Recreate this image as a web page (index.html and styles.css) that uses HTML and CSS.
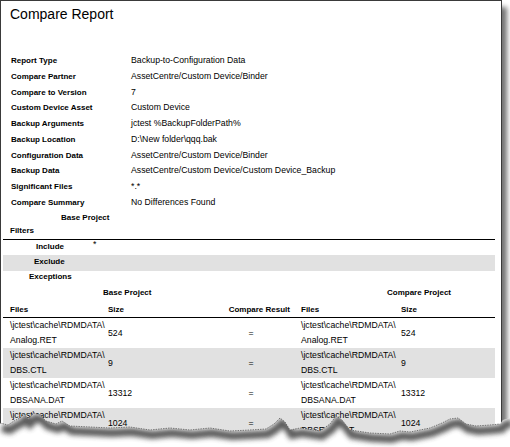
FILE: index.html
```html
<!DOCTYPE html>
<html>
<head>
<meta charset="utf-8">
<title>Compare Report</title>
<link rel="stylesheet" href="styles.css">
</head>
<body>
<div class="sheet">
  <div class="page">
    <h1 class="title">Compare Report</h1>
    <div class="info">
      <div class="irow"><b class="lbl">Report Type</b><span>Backup-to-Configuration Data</span></div>
      <div class="irow"><b class="lbl">Compare Partner</b><span>AssetCentre/Custom Device/Binder</span></div>
      <div class="irow"><b class="lbl">Compare to Version</b><span>7</span></div>
      <div class="irow"><b class="lbl">Custom Device Asset</b><span>Custom Device</span></div>
      <div class="irow"><b class="lbl">Backup Arguments</b><span>jctest %BackupFolderPath%</span></div>
      <div class="irow"><b class="lbl">Backup Location</b><span>D:\New folder\qqq.bak</span></div>
      <div class="irow"><b class="lbl">Configuration Data</b><span>AssetCentre/Custom Device/Binder</span></div>
      <div class="irow"><b class="lbl">Backup Data</b><span>AssetCentre/Custom Device/Custom Device_Backup</span></div>
      <div class="irow"><b class="lbl">Significant Files</b><span>*.*</span></div>
      <div class="irow"><b class="lbl">Compare Summary</b><span>No Differences Found</span></div>
    </div>
    <div class="bp">Base Project</div>
    <div class="filters">Filters</div>
    <div class="frow include"><b>Include</b><span class="star">*</span></div>
    <div class="frow exclude"><b>Exclude</b></div>
    <div class="frow exceptions"><b>Exceptions</b></div>
    <div class="groups"><b class="g1">Base Project</b><b>Compare Project</b></div>
    <div class="tbl">
      <div class="trow head">
        <div class="c1">Files</div><div class="c2">Size</div><div class="c3">Compare Result</div><div class="c4">Files</div><div class="c5">Size</div>
      </div>
      <div class="trow">
        <div class="c1">\jctest\cache\RDMDATA\<br>Analog.RET</div><div class="c2 mid">524</div><div class="c3 mid">=</div><div class="c4">\jctest\cache\RDMDATA\<br>Analog.RET</div><div class="c5 mid">524</div>
      </div>
      <div class="trow alt">
        <div class="c1">\jctest\cache\RDMDATA\<br>DBS.CTL</div><div class="c2 mid">9</div><div class="c3 mid">=</div><div class="c4">\jctest\cache\RDMDATA\<br>DBS.CTL</div><div class="c5 mid">9</div>
      </div>
      <div class="trow">
        <div class="c1">\jctest\cache\RDMDATA\<br>DBSANA.DAT</div><div class="c2 mid">13312</div><div class="c3 mid">=</div><div class="c4">\jctest\cache\RDMDATA\<br>DBSANA.DAT</div><div class="c5 mid">13312</div>
      </div>
      <div class="trow alt">
        <div class="c1">\jctest\cache\RDMDATA\<br>DBSRPT.DAT</div><div class="c2 mid">1024</div><div class="c3 mid">=</div><div class="c4">\jctest\cache\RDMDATA\<br>DBSRPT.DAT</div><div class="c5 mid">1024</div>
      </div>
    </div>
  </div>
  <svg class="torn" width="510" height="447" viewBox="0 0 510 447">
    <defs>
      <filter id="blur" x="-5%" y="-50%" width="110%" height="200%">
        <feGaussianBlur stdDeviation="2.6"/>
      </filter>
      <clipPath id="below">
        <path d="M0,447 L0,423 L8,425 L14,421 L20,418 L24,414 L28,419 L34,413 L40,415 L46,421 L56,424 L62,421 L70,426 L90,427 L110,428 L130,427 L150,430 L170,428 L190,430 L210,428 L230,431 L250,430 L266,429 L274,424 L280,418 L285,422 L290,430 L300,428 L320,431 L330,424 L336,416 L342,420 L350,430 L370,433 L390,434 L400,431 L410,432 L430,428 L442,423 L450,419 L458,418 L466,424 L476,426 L490,425 L500,424 L503,420 L510,418 L510,447 Z"/>
      </clipPath>
    </defs>
    <path class="paper" d="M0,447 L0,423 L8,425 L14,421 L20,418 L24,414 L28,419 L34,413 L40,415 L46,421 L56,424 L62,421 L70,426 L90,427 L110,428 L130,427 L150,430 L170,428 L190,430 L210,428 L230,431 L250,430 L266,429 L274,424 L280,418 L285,422 L290,430 L300,428 L320,431 L330,424 L336,416 L342,420 L350,430 L370,433 L390,434 L400,431 L410,432 L430,428 L442,423 L450,419 L458,418 L466,424 L476,426 L490,425 L500,424 L503,420 L510,418 L510,447 Z"/>
    <g clip-path="url(#below)">
      <path class="shadow" filter="url(#blur)" transform="translate(2,5)" d="M0,423 L8,425 L14,421 L20,418 L24,414 L28,419 L34,413 L40,415 L46,421 L56,424 L62,421 L70,426 L90,427 L110,428 L130,427 L150,430 L170,428 L190,430 L210,428 L230,431 L250,430 L266,429 L274,424 L280,418 L285,422 L290,430 L300,428 L320,431 L330,424 L336,416 L342,420 L350,430 L370,433 L390,434 L400,431 L410,432 L430,428 L442,423 L450,419 L458,418 L466,424 L476,426 L490,425 L500,424 L503,420 L510,418"/>
    </g>
    <path class="edge" d="M0,423 L8,425 L14,421 L20,418 L24,414 L28,419 L34,413 L40,415 L46,421 L56,424 L62,421 L70,426 L90,427 L110,428 L130,427 L150,430 L170,428 L190,430 L210,428 L230,431 L250,430 L266,429 L274,424 L280,418 L285,422 L290,430 L300,428 L320,431 L330,424 L336,416 L342,420 L350,430 L370,433 L390,434 L400,431 L410,432 L430,428 L442,423 L450,419 L458,418 L466,424 L476,426 L490,425 L500,424"/>
  </svg>
</div>
</body>
</html>
```

FILE: styles.css
```css
html, body {
  margin: 0;
  background: #fff;
}

body {
  font-family: "Liberation Sans", Arial, sans-serif;
  font-size: 8.7px;
  color: #000;
}

b {
  font-weight: bold;
  font-size: 8px;
}

.sheet {
  position: relative;
  width: 510px;
  height: 447px;
  overflow: hidden;
  background: #fff;
}

.page {
  box-sizing: border-box;
  width: 502px;
  height: 447px;
  padding: 5px 6px 0 2px;
  border: 1px solid #3a3a3a;
  border-bottom: 0;
  background: #fff;
  box-shadow: 5px 7px 5px rgba(0, 0, 0, 0.55);
}

.title {
  margin: 0;
  padding-left: 7px;
  font-size: 14px;
  line-height: 16px;
  font-weight: normal;
}

.info {
  margin-top: 31px;
  padding-left: 8px;
}

.irow {
  display: grid;
  grid-template-columns: 120px 1fr;
  align-items: baseline;
  line-height: 15.75px;
  white-space: nowrap;
}

.lbl {
  line-height: 15.75px;
}

.bp {
  padding-left: 58px;
  font-weight: bold;
  font-size: 8px;
  line-height: 13px;
}

.filters {
  padding-left: 7px;
  padding-bottom: 2px;
  font-weight: bold;
  font-size: 8px;
  line-height: 13px;
  border-bottom: 1px solid #000;
}

.frow {
  font-size: 8px;
  white-space: nowrap;
}

.include {
  display: grid;
  grid-template-columns: 57px auto;
  padding-left: 33px;
  line-height: 13px;
  padding-bottom: 2.5px;
}

.star {
  font-size: 8.7px;
  position: relative;
  top: -2px;
}

.exclude {
  padding-left: 31px;
  line-height: 14px;
  padding-bottom: 2px;
  background: #e1e1e1;
}

.exceptions {
  padding-left: 26px;
  line-height: 12px;
  padding-bottom: 2px;
}

.groups {
  display: grid;
  grid-template-columns: 384px 1fr;
  line-height: 15px;
}

.g1 {
  padding-left: 100px;
}

.tbl {
  white-space: nowrap;
}

.trow {
  display: grid;
  grid-template-columns: 103px 102px 86px 105px 96px;
  height: 30px;
  line-height: 15px;
}

.trow.head {
  height: auto;
  padding-top: 2px;
  border-bottom: 1px solid #000;
  font-weight: bold;
  font-size: 8px;
}

.trow.alt {
  background: #e1e1e1;
}

.c1, .c4 {
  padding-left: 7px;
}

.c2, .c5 {
  padding-left: 2px;
}

.c3 {
  text-align: center;
}

.head .c3 {
  text-align: right;
  padding-right: 4px;
}

.mid {
  align-self: center;
}

.torn {
  position: absolute;
  left: 0;
  top: 0;
}

.paper {
  fill: #fff;
}

.shadow {
  fill: none;
  stroke: #3c3c3c;
  stroke-width: 8;
  opacity: 0.85;
}

.edge {
  fill: none;
  stroke: #5a5a5a;
  stroke-width: 0.8;
  stroke-dasharray: 1.5 1;
}
```
